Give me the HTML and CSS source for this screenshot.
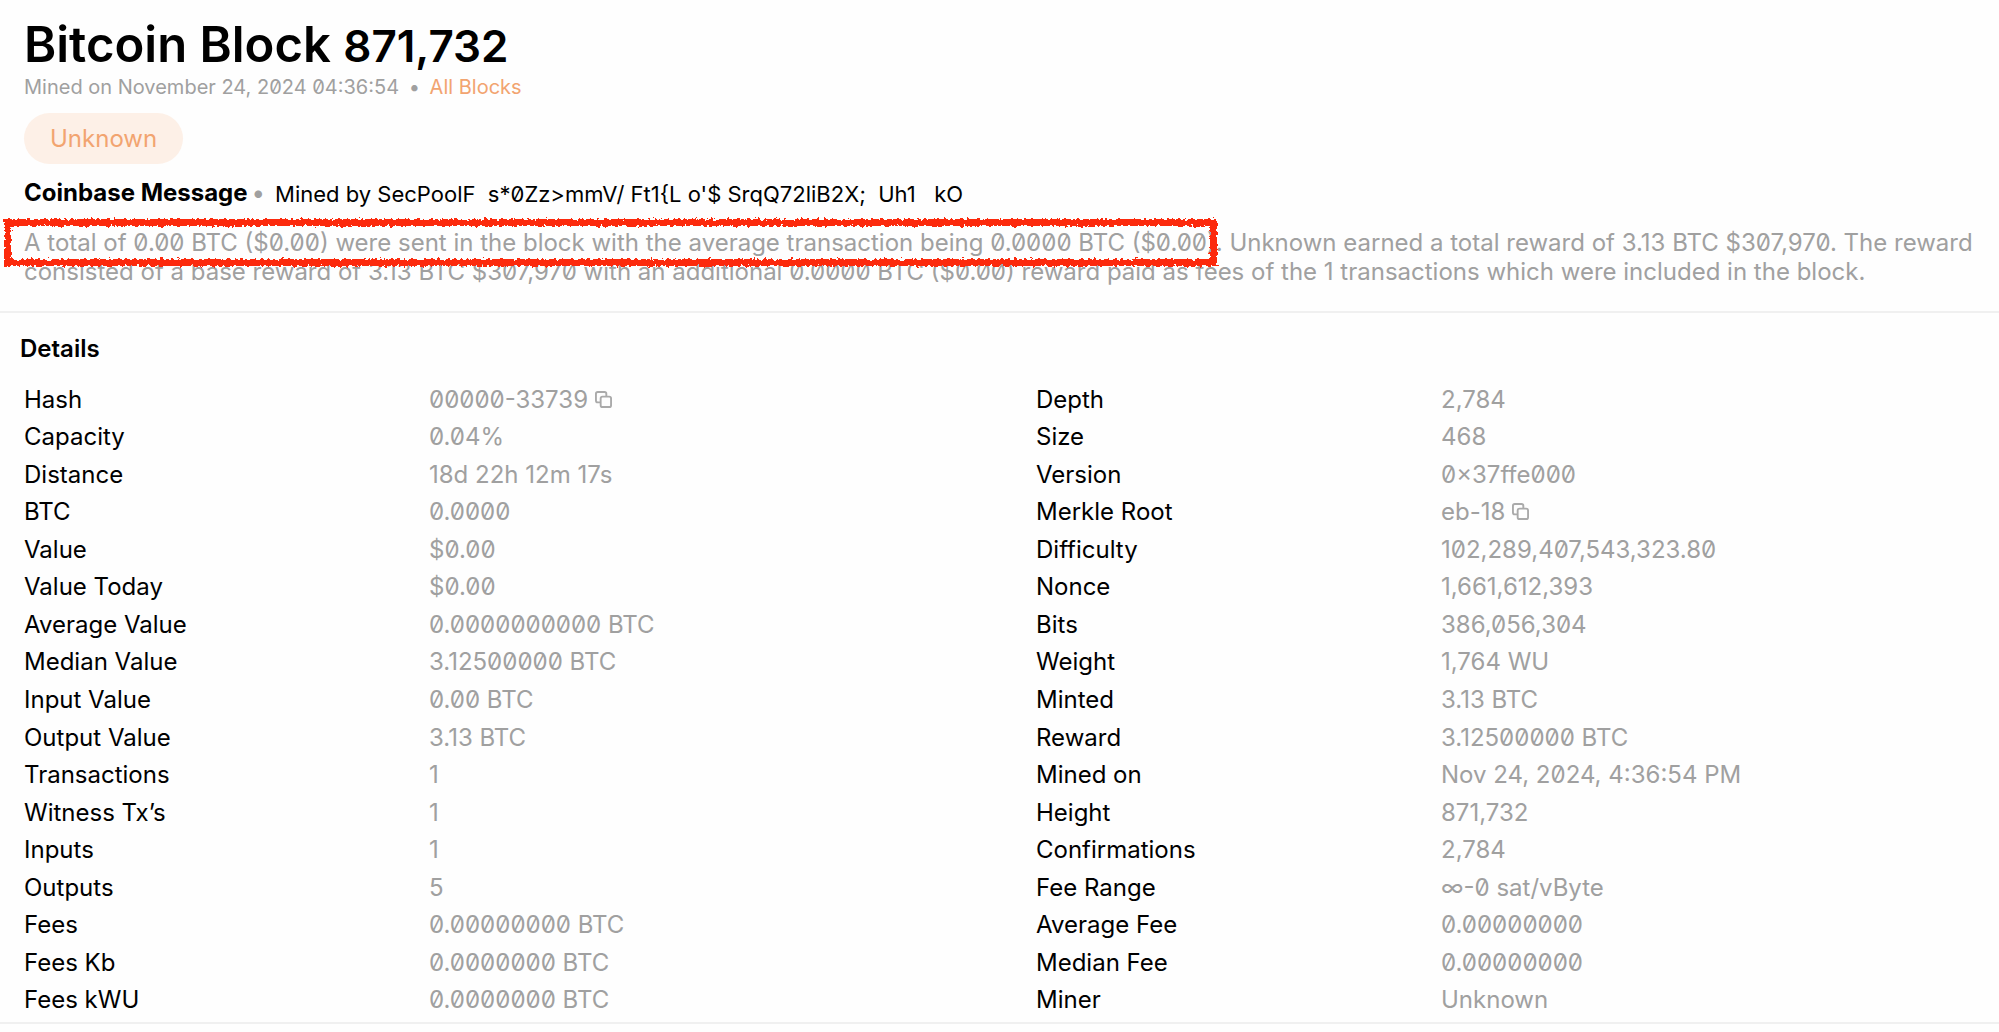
FILE: index.html
```html
<!DOCTYPE html>
<html lang="en">

<head>
    <meta charset="UTF-8">
    <meta name="viewport" content="width=device-width, initial-scale=1.0">
    <title>Bitcoin Block 871,732</title>
    <link rel="stylesheet" href="styles.css">
</head>

<body>
    <header class="block-header">
        <h1 class="title">Bitcoin Block <span class="height">871,732</span></h1>
        <p class="mined">Mined on November 24, 2024 04:36:54 <span class="sep">•</span> <a href="#">All Blocks</a></p>
        <a href="#" class="miner">Unknown</a>
        <div class="coinbase">
            <h2>Coinbase Message</h2>
            <span class="dot">•</span>
            <p>Mined by SecPoolF  s*0Zz&gt;mmV/ Ft1{L o'$ SrqQ72liB2X;  Uh1   kO</p>
        </div>
        <p class="summary">A total of 0.00 BTC ($0.00) were sent in the block with the average transaction being 0.0000 BTC ($0.00). Unknown earned a total reward of 3.13 BTC $307,970. The reward consisted of a base reward of 3.13 BTC $307,970 with an additional 0.0000 BTC ($0.00) reward paid as fees of the 1 transactions which were included in the block.</p>
    </header>

    <section class="details">
        <h2>Details</h2>
        <div class="columns">
            <dl>
                <dt>Hash</dt>
                <dd>00000-33739 <button type="button" class="copy" aria-label="Copy hash"><svg viewBox="0 0 18 18"><rect x="6" y="6" width="11" height="11" rx="2" /><path d="M6 12H3a2 2 0 0 1-2-2V3a2 2 0 0 1 2-2h7a2 2 0 0 1 2 2v3" /></svg></button></dd>
                <dt>Capacity</dt>
                <dd>0.04%</dd>
                <dt>Distance</dt>
                <dd>18d 22h 12m 17s</dd>
                <dt>BTC</dt>
                <dd>0.0000</dd>
                <dt>Value</dt>
                <dd>$0.00</dd>
                <dt>Value Today</dt>
                <dd>$0.00</dd>
                <dt>Average Value</dt>
                <dd>0.0000000000 BTC</dd>
                <dt>Median Value</dt>
                <dd>3.12500000 BTC</dd>
                <dt>Input Value</dt>
                <dd>0.00 BTC</dd>
                <dt>Output Value</dt>
                <dd>3.13 BTC</dd>
                <dt>Transactions</dt>
                <dd>1</dd>
                <dt>Witness Tx’s</dt>
                <dd>1</dd>
                <dt>Inputs</dt>
                <dd>1</dd>
                <dt>Outputs</dt>
                <dd>5</dd>
                <dt>Fees</dt>
                <dd>0.00000000 BTC</dd>
                <dt>Fees Kb</dt>
                <dd>0.0000000 BTC</dd>
                <dt>Fees kWU</dt>
                <dd>0.0000000 BTC</dd>
            </dl>
            <dl>
                <dt>Depth</dt>
                <dd>2,784</dd>
                <dt>Size</dt>
                <dd>468</dd>
                <dt>Version</dt>
                <dd>0×37ffe000</dd>
                <dt>Merkle Root</dt>
                <dd>eb-18 <button type="button" class="copy" aria-label="Copy merkle root"><svg viewBox="0 0 18 18"><rect x="6" y="6" width="11" height="11" rx="2" /><path d="M6 12H3a2 2 0 0 1-2-2V3a2 2 0 0 1 2-2h7a2 2 0 0 1 2 2v3" /></svg></button></dd>
                <dt>Difficulty</dt>
                <dd>102,289,407,543,323.80</dd>
                <dt>Nonce</dt>
                <dd>1,661,612,393</dd>
                <dt>Bits</dt>
                <dd>386,056,304</dd>
                <dt>Weight</dt>
                <dd>1,764 WU</dd>
                <dt>Minted</dt>
                <dd>3.13 BTC</dd>
                <dt>Reward</dt>
                <dd>3.12500000 BTC</dd>
                <dt>Mined on</dt>
                <dd>Nov 24, 2024, 4:36:54 PM</dd>
                <dt>Height</dt>
                <dd>871,732</dd>
                <dt>Confirmations</dt>
                <dd>2,784</dd>
                <dt>Fee Range</dt>
                <dd>∞-0 sat/vByte</dd>
                <dt>Average Fee</dt>
                <dd>0.00000000</dd>
                <dt>Median Fee</dt>
                <dd>0.00000000</dd>
                <dt>Miner</dt>
                <dd>Unknown</dd>
            </dl>
        </div>
    </section>

    <!-- rough edge for the hand drawn frame -->
    <svg class="filters" width="0" height="0" aria-hidden="true">
        <filter id="rough" x="-1%" y="-20%" width="102%" height="140%">
            <feTurbulence type="fractalNoise" baseFrequency="0.3" numOctaves="2" seed="4" />
            <feDisplacementMap in="SourceGraphic" scale="6" xChannelSelector="R" yChannelSelector="G" />
        </filter>
    </svg>
</body>

</html>
```

FILE: styles.css
```css
* {
    box-sizing: border-box;
}

body {
    display: flex;
    flex-direction: column;
    min-height: 100vh;
    margin: 0;
    padding-bottom: 8px;
    background: #fefefe;
    color: #000;
    font-family: Inter, "Liberation Sans", sans-serif;
    font-size: 24px;
    font-optical-sizing: none;
    font-feature-settings: "zero";
}

h1,
h2,
p,
dl,
dd {
    margin: 0;
}

a {
    color: #f2a470;
    text-decoration: none;
}

/* header */
.block-header {
    padding: 16px 24px 25px;
    border-bottom: 2px solid #f0f0f0;
}

.title {
    font-size: 49px;
    font-weight: 600;
    line-height: 58px;
}

.height {
    font-size: 44px;
}

.mined {
    color: #a0a0a0;
    font-size: 20px;
    line-height: 24px;
}

.sep {
    margin: 0 4px;
}

.miner {
    display: inline-block;
    margin: 14px 0 11px;
    padding: 0 26px;
    border-radius: 26px;
    background: #fdf0e7;
    line-height: 51px;
}

.coinbase {
    display: flex;
    align-items: center;
    line-height: 32px;
}

.coinbase h2 {
    font-size: 24px;
    font-weight: 700;
}

.coinbase p {
    margin-top: 3px;
    font-size: 22px;
    white-space: pre-wrap;
}

.dot {
    margin: 0 10px 0 4px;
    color: #a0a0a0;
}

.summary {
    position: relative;
    margin-top: 18px;
    color: #a0a0a0;
    line-height: 29px;
}

/* hand drawn frame round the first sentence */
.summary::after {
    content: "";
    position: absolute;
    top: -9px;
    left: -20px;
    box-sizing: border-box;
    width: 1213px;
    height: 47px;
    border: 7px solid #fc2a0c;
    filter: url(#rough);
    pointer-events: none;
}

.filters {
    position: absolute;
}

/* details */
.details {
    display: flex;
    flex: 1;
    flex-direction: column;
    border-bottom: 2px solid #f0f0f0;
}

.details h2 {
    padding: 21px 20px 17px;
    font-size: 24px;
    font-weight: 600;
    line-height: 30px;
}

.columns {
    display: grid;
    flex: 1;
    grid-template-columns: 1012fr 963fr;
    padding: 0 0 3px 24px;
}

dl {
    display: grid;
    grid-template-columns: 405px 1fr;
    align-items: center;
    line-height: 30px;
}

dd {
    color: #a0a0a0;
}

.copy {
    padding: 0;
    border: none;
    background: none;
    cursor: pointer;
}

.copy svg {
    display: block;
    width: 17px;
    height: 17px;
    fill: none;
    stroke: #aaa;
    stroke-width: 2;
}
```
